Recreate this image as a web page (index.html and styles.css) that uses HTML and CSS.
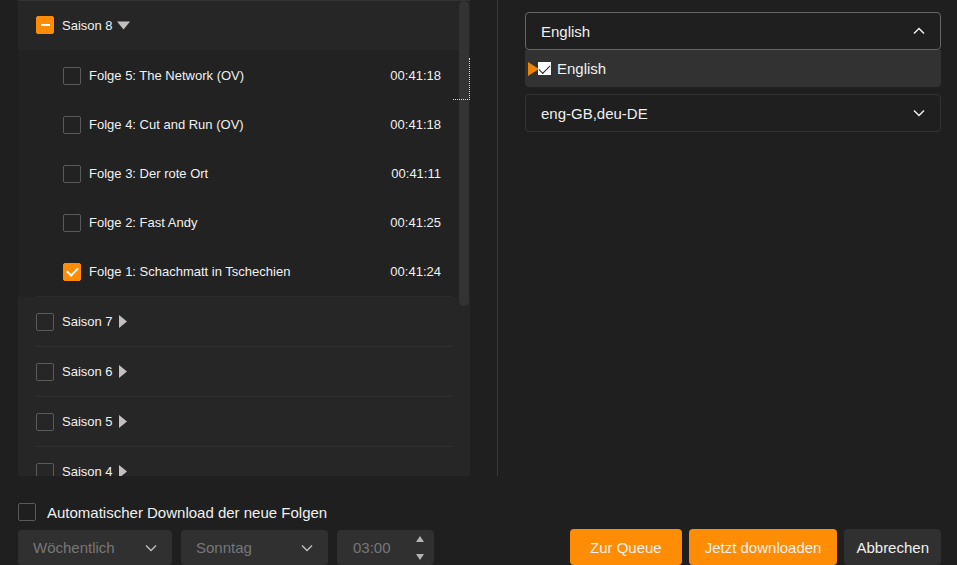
FILE: index.html
```html
<!DOCTYPE html>
<html lang="de">
<head>
  <meta charset="UTF-8" />
  <meta name="viewport" content="width=device-width,initial-scale=1.0" />
  <title>Download</title>
  <link rel="stylesheet" href="styles.css">
</head>
<body>
  <main class="content">
    <!-- seasons and episodes -->
    <section class="left">
      <div class="list">
        <div class="season open">
          <input type="checkbox" class="check mixed" id="s8" aria-checked="mixed" />
          <label for="s8">Saison 8</label>
          <button class="toggle" aria-label="Saison 8 zuklappen"><svg width="13" height="9" viewBox="0 0 13 9"><path d="M0 0.500H13L6.500 8.500Z" fill="#c4c0c0"/></svg></button>
        </div>
        <div class="episodes">
          <div class="episode"><input type="checkbox" class="check" id="e5" /><label for="e5">Folge 5: The Network (OV)</label><span class="time">00:41:18</span></div>
          <div class="episode"><input type="checkbox" class="check" id="e4" /><label for="e4">Folge 4: Cut and Run (OV)</label><span class="time">00:41:18</span></div>
          <div class="episode"><input type="checkbox" class="check" id="e3" /><label for="e3">Folge 3: Der rote Ort</label><span class="time">00:41:11</span></div>
          <div class="episode"><input type="checkbox" class="check" id="e2" /><label for="e2">Folge 2: Fast Andy</label><span class="time">00:41:25</span></div>
          <div class="episode"><input type="checkbox" class="check" id="e1" checked /><label for="e1">Folge 1: Schachmatt in Tschechien</label><span class="time">00:41:24</span></div>
        </div>
        <div class="season">
          <input type="checkbox" class="check" id="s7" />
          <label for="s7">Saison 7</label>
          <button class="toggle closed" aria-label="Saison 7 aufklappen"><svg width="8" height="13" viewBox="0 0 8 13"><path d="M0 0L8 6.500L0 13Z" fill="#c4c0c0"/></svg></button>
        </div>
        <div class="season">
          <input type="checkbox" class="check" id="s6" />
          <label for="s6">Saison 6</label>
          <button class="toggle closed" aria-label="Saison 6 aufklappen"><svg width="8" height="13" viewBox="0 0 8 13"><path d="M0 0L8 6.500L0 13Z" fill="#c4c0c0"/></svg></button>
        </div>
        <div class="season">
          <input type="checkbox" class="check" id="s5" />
          <label for="s5">Saison 5</label>
          <button class="toggle closed" aria-label="Saison 5 aufklappen"><svg width="8" height="13" viewBox="0 0 8 13"><path d="M0 0L8 6.500L0 13Z" fill="#c4c0c0"/></svg></button>
        </div>
        <div class="season">
          <input type="checkbox" class="check" id="s4" />
          <label for="s4">Saison 4</label>
          <button class="toggle closed" aria-label="Saison 4 aufklappen"><svg width="8" height="13" viewBox="0 0 8 13"><path d="M0 0L8 6.500L0 13Z" fill="#c4c0c0"/></svg></button>
        </div>
        <div class="thumb"></div>
        <div class="focus-rect"></div>
      </div>
    </section>

    <!-- languages -->
    <section class="right">
      <div class="dropdown">
        <div class="field active">
          <select aria-label="Audio"><option>English</option></select>
          <svg class="chevron" width="12" height="8" viewBox="0 0 12 8"><path d="M1 6.500L6 1.500L11 6.500"/></svg>
        </div>
        <div class="menu">
          <svg width="11" height="14" viewBox="0 0 11 14"><path d="M0 0L11 7L0 14Z" fill="#ee8407"/></svg>
          <input type="checkbox" class="menu-check" id="audioEn" checked />
          <label for="audioEn">English</label>
        </div>
      </div>
      <div class="field">
        <select aria-label="Untertitel"><option>eng-GB,deu-DE</option></select>
        <svg class="chevron" width="12" height="8" viewBox="0 0 12 8"><path d="M1 1.500L6 6.500L11 1.500"/></svg>
      </div>
    </section>
  </main>

  <footer class="footer">
    <div class="auto">
      <div class="auto-label">
        <input type="checkbox" class="check" id="auto" />
        <label for="auto">Automatischer Download der neue Folgen</label>
      </div>
      <div class="schedule">
        <div class="field filled interval">
          <select aria-label="Intervall" disabled><option>Wöchentlich</option></select>
          <svg class="chevron" width="12" height="8" viewBox="0 0 12 8"><path d="M1 1.500L6 6.500L11 1.500"/></svg>
        </div>
        <div class="field filled day">
          <select aria-label="Tag" disabled><option>Sonntag</option></select>
          <svg class="chevron" width="12" height="8" viewBox="0 0 12 8"><path d="M1 1.500L6 6.500L11 1.500"/></svg>
        </div>
        <div class="field filled clock">
          <input type="text" aria-label="Uhrzeit" value="03:00" disabled />
          <div class="spin">
            <button aria-label="Später" disabled><svg width="8" height="6" viewBox="0 0 8 6"><path d="M0 6L4 0L8 6Z" fill="#b4b4b4"/></svg></button>
            <button aria-label="Früher" disabled><svg width="8" height="6" viewBox="0 0 8 6"><path d="M0 0L4 6L8 0Z" fill="#b4b4b4"/></svg></button>
          </div>
        </div>
      </div>
    </div>
    <div class="actions">
      <button class="btn primary">Zur Queue</button>
      <button class="btn primary narrow">Jetzt downloaden</button>
      <button class="btn">Abbrechen</button>
    </div>
  </footer>
</body>
</html>
```
FILE: styles.css
```css
:root {
  --bg:#1f1f1f;
  --list:#262626;
  --episodes:#222;
  --control:#303030;
  --text:#f0f0f0;
  --muted:#777;
  --accent:#ff8c05;
  --radius:4px;
}
*{box-sizing:border-box;margin:0;padding:0}
body{font-family:"Liberation Sans",Arial,Helvetica,sans-serif;font-size:15px;background:var(--bg);color:var(--text);height:100vh;display:flex;flex-direction:column;overflow:hidden}
button,select,input{font:inherit;color:inherit;border:none;background:none}
svg{display:block;flex:none}

.content{flex:1;min-height:0;display:grid;grid-template-columns:minmax(0,13fr) minmax(0,12fr);grid-template-rows:minmax(0,1fr);padding:0 16px 0 18px}
.left{padding-right:27px;border-right:1px solid #3a3a3a}
.right{padding:12px 0 0 27px;display:flex;flex-direction:column;gap:7px}

/* season list */
.list{position:relative;height:100%;overflow:hidden;background:var(--list);border-top:1px solid #333;font-size:13px}
.season{display:flex;align-items:center;gap:8px;height:50px;margin:0 18px;border-bottom:1px solid #303030}
.season.open{height:49px;border-color:var(--list)}
.toggle{cursor:pointer;margin-left:-4px}
.toggle.closed{margin-left:-2px}
.episodes{background:var(--episodes);padding:1px 18px 0}
.episodes::after{content:"";display:block;border-bottom:1px solid #2c2c2c}
.episode{display:flex;align-items:center;gap:8px;height:49px;padding:0 11px 0 27px}
.time{margin-left:auto}
.thumb{position:absolute;top:0;right:1px;width:10px;height:305px;border-radius:5px;background:#333}
.focus-rect{position:absolute;top:57px;right:0;width:17px;height:42px;border:1px dotted #ddd;border-width:0 1px 1px 0}

/* checkboxes */
.check{appearance:none;flex:none;width:18px;height:18px;border:1px solid #5a5a5a;border-radius:2px;display:grid;place-content:center}
.check:checked,.check.mixed{background:var(--accent);border-color:var(--accent)}
.check:checked::after{content:"";width:9px;height:5px;border:solid #fff;border-width:0 0 2px 2px;transform:translateY(-1px) rotate(-45deg)}
.check.mixed::after{content:"";width:9px;height:2px;background:#fff}
.menu-check{appearance:none;flex:none;width:13px;height:13px;background:#fff;display:grid;place-content:center}
.menu-check:checked::after{content:"";width:10px;height:5px;border:solid #222;border-width:0 0 1px 1px;transform:translateY(-1px) rotate(-45deg)}

/* dropdowns */
.field{display:flex;align-items:center;position:relative;height:38px;border:1px solid #333;border-radius:var(--radius)}
.field.active{border-color:#666}
.field select{appearance:none;width:100%;height:100%;padding:0 15px;outline:none}
.chevron{position:absolute;right:15px;pointer-events:none;fill:none;stroke:#eee;stroke-width:1.5}
.menu{display:flex;align-items:center;height:37px;padding-left:3px;background:#323232;border-radius:0 0 var(--radius) var(--radius)}
.menu svg{margin-right:-1px}
.menu label{margin-left:6px}

/* bottom bar */
.footer{display:flex;justify-content:space-between;align-items:flex-end;padding:27px 16px 0 18px}
.auto{display:flex;flex-direction:column;gap:9px}
.auto-label{display:flex;align-items:center;gap:11px;height:18px}
.schedule{display:flex;gap:9px}
.filled{height:35px;border:none;background:var(--control);color:var(--muted)}
.filled select:disabled,.filled input:disabled{color:var(--muted);opacity:1}
.filled .chevron{stroke:#bbb}
.interval{width:154px}
.day{width:147px}
.clock{width:97px;padding:0 10px 0 16px}
.clock input{flex:1;min-width:0}
.spin{display:flex;flex-direction:column;gap:12px}
.spin button{display:block}
.actions{display:flex;gap:7px}
.btn{cursor:pointer;height:36px;padding:0 12px;border-radius:var(--radius);background:var(--control)}
.btn.primary{background:var(--accent);padding:0 20px}
.btn.narrow{padding:0 16px}
```
